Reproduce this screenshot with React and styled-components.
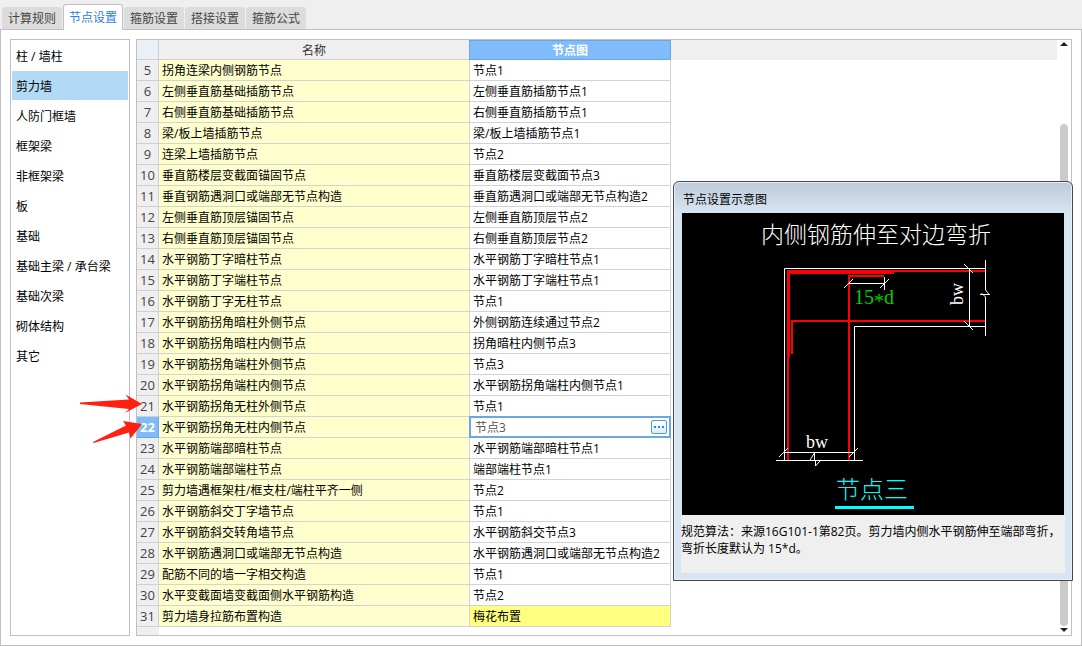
import { useState } from 'react'
import styled, { createGlobalStyle } from 'styled-components'

const GlobalStyle = createGlobalStyle`
    * {
        box-sizing: border-box;
    }
    body {
        margin: 0;
        background: #efefef;
        color: #000;
        font: 12px/20px 'Open Sans', 'Noto Sans CJK SC', sans-serif;
    }
    button, input {
        font: inherit;
        color: inherit;
    }
`
const Page = styled.div`
    position: relative;
    display: flex;
    flex-direction: column;
    min-height: 100vh;
`
const TabBar = styled.nav`
    display: flex;
    align-items: flex-end;
    gap: 1px;
    height: 30px;
    padding-left: 2px;
    z-index: 1;
`
const Tab = styled.button`
    height: ${props => props.$active ? '26px' : '22px'};
    margin-bottom: ${props => props.$active ? '0' : '1px'};
    padding: 0 5px;
    border: 1px solid ${props => props.$active ? '#c0c0c4' : '#dcdcdc'};
    border-bottom: none;
    border-radius: 3px 3px 0 0;
    background: ${props => props.$active ? '#fff' : '#dcdcdc'};
    color: ${props => props.$active ? '#2a7de1' : '#444'};
`
const Panel = styled.main`
    flex: 1;
    display: flex;
    gap: 6px;
    margin-top: -1px;
    padding: 9px;
    border: 1px solid #c0c0c4;
    background: #fff;
`
const Sidebar = styled.ul`
    flex: none;
    width: 120px;
    margin: 0;
    padding: 1px;
    border: 1px solid #c0c0c4;
    list-style: none;
`
const SideItem = styled.button`
    display: block;
    width: 100%;
    height: 29px;
    margin-bottom: 1px;
    padding: 2px 4px 0;
    border: none;
    background: ${props => props.$active ? '#b3daf5' : 'transparent'};
    text-align: left;
`
const GridArea = styled.section`
    flex: 1;
    display: flex;
    border: 1px solid #c0c0c4;
    background: linear-gradient(to right, #efefef 22px, #fff 22px);
`
const TableBox = styled.div`
    flex: 1;
`
const Table = styled.table`
    width: 100%;
    table-layout: fixed;
    border-collapse: separate;
    border-spacing: 0;

    col.number {
        width: 22px;
    }
    col.name {
        width: 311px;
    }
    col.node {
        width: 201px;
    }
`
const HeadCell = styled.th`
    height: 20px;
    padding: 2px 0 0;
    border: solid ${props => props.$active ? '#68a6e8' : '#d0d0d3'};
    border-width: 0 1px 1px 0;
    background: ${props => props.$active ? '#80bbfa' : '#efefef'};
    box-shadow: ${props => props.$active ? '-1px 0 #68a6e8, inset 0 1px #68a6e8' : 'none'};
    color: ${props => props.$active ? '#fff' : '#333'};
    font-weight: ${props => props.$active ? '700' : '400'};
    line-height: 17px;

    &:first-child {
        background: #ebeff6;
    }
    &:last-child {
        border-color: #efefef;
    }
`
const RowNumber = styled.th`
    height: 21px;
    padding: 0;
    border: solid ${props => props.$active ? '#68a6e8' : '#d0d0d3'};
    border-width: 0 1px 1px 0;
    background: ${props => props.$active ? '#80bbfa' : '#efefef'};
    color: ${props => props.$active ? '#fff' : '#444'};
    font-size: 13px;
    font-weight: ${props => props.$active ? '700' : '400'};
`
const Cell = styled.td`
    position: relative;
    height: 21px;
    padding: 2px 3px 0;
    border: solid #d3d3d3;
    border-width: 0 1px 1px 0;
    background: ${props => props.$fill || '#fff'};
    line-height: 18px;
    white-space: nowrap;
`
const Editor = styled.div`
    position: absolute;
    inset: -1px;
    display: flex;
    align-items: center;
    padding: 0 2px 0 4px;
    border: 2px solid #6ca6e6;
    background: #fff;

    input {
        flex: 1;
        min-width: 0;
        height: 18px;
        padding: 2px 0 0;
        border: none;
        outline: none;
        background: transparent;
        color: #555;
    }
    button {
        display: flex;
        align-items: center;
        justify-content: center;
        width: 16px;
        height: 14px;
        padding: 0;
        border: 1px solid #4a9be0;
        border-radius: 2px;
        background: linear-gradient(#fff, #dcebf8);
    }
`
const Scrollbar = styled.div`
    display: flex;
    flex-direction: column;
    align-items: center;
    width: 14px;
    padding: 2px 2px 3px;
    background: #fff;

    svg {
        display: block;
        flex: none;
    }
`
const Track = styled.div`
    flex: 1;
    display: flex;
    padding: 78px 0 2px;
`
const Thumb = styled.div`
    width: 8px;
    border-radius: 4px;
    background: #cbcbcb;
`
const Popup = styled.aside`
    position: absolute;
    top: 181px;
    right: 9px;
    width: 400px;
    padding: 0 7px 7px;
    border: 1px solid #45484c;
    border-radius: 6px 6px 0 0;
    background: linear-gradient(#bccad9, #d7e4f2 30px);
    box-shadow: inset 0 0 0 1px #e6eef7;

    h2 {
        margin: 0;
        padding: 8px 2px 3px;
        font-size: 12px;
        font-weight: 400;
        line-height: 20px;
    }
    svg {
        display: block;
        width: 382px;
        margin: 0 auto;
    }
    p {
        min-height: 58px;
        margin: 0;
        padding: 8px 0 0;
        background: #efefef;
        line-height: 17px;
    }
`
const Marks = styled.svg`
    position: absolute;
    left: 76px;
    top: 390px;
    pointer-events: none;
`

const tabs = ['计算规则', '节点设置', '箍筋设置', '搭接设置', '箍筋公式']
const groups = ['柱 / 墙柱', '剪力墙', '人防门框墙', '框架梁', '非框架梁', '板', '基础', '基础主梁 / 承台梁', '基础次梁', '砌体结构', '其它']
const rows = [
    [5, '拐角连梁内侧钢筋节点', '节点1'],
    [6, '左侧垂直筋基础插筋节点', '左侧垂直筋插筋节点1'],
    [7, '右侧垂直筋基础插筋节点', '右侧垂直筋插筋节点1'],
    [8, '梁/板上墙插筋节点', '梁/板上墙插筋节点1'],
    [9, '连梁上墙插筋节点', '节点2'],
    [10, '垂直筋楼层变截面锚固节点', '垂直筋楼层变截面节点3'],
    [11, '垂直钢筋遇洞口或端部无节点构造', '垂直筋遇洞口或端部无节点构造2'],
    [12, '左侧垂直筋顶层锚固节点', '左侧垂直筋顶层节点2'],
    [13, '右侧垂直筋顶层锚固节点', '右侧垂直筋顶层节点2'],
    [14, '水平钢筋丁字暗柱节点', '水平钢筋丁字暗柱节点1'],
    [15, '水平钢筋丁字端柱节点', '水平钢筋丁字端柱节点1'],
    [16, '水平钢筋丁字无柱节点', '节点1'],
    [17, '水平钢筋拐角暗柱外侧节点', '外侧钢筋连续通过节点2'],
    [18, '水平钢筋拐角暗柱内侧节点', '拐角暗柱内侧节点3'],
    [19, '水平钢筋拐角端柱外侧节点', '节点3'],
    [20, '水平钢筋拐角端柱内侧节点', '水平钢筋拐角端柱内侧节点1'],
    [21, '水平钢筋拐角无柱外侧节点', '节点1'],
    [22, '水平钢筋拐角无柱内侧节点', '节点3'],
    [23, '水平钢筋端部暗柱节点', '水平钢筋端部暗柱节点1'],
    [24, '水平钢筋端部端柱节点', '端部端柱节点1'],
    [25, '剪力墙遇框架柱/框支柱/端柱平齐一侧', '节点2'],
    [26, '水平钢筋斜交丁字墙节点', '节点1'],
    [27, '水平钢筋斜交转角墙节点', '水平钢筋斜交节点3'],
    [28, '水平钢筋遇洞口或端部无节点构造', '水平钢筋遇洞口或端部无节点构造2'],
    [29, '配筋不同的墙一字相交构造', '节点1'],
    [30, '水平变截面墙变截面侧水平钢筋构造', '节点2'],
    [31, '剪力墙身拉筋布置构造', '梅花布置'],
]
const editingRow = 22
const changedRow = 31

const Diagram = () => (
    <svg viewBox="682 213 382 302" role="img" aria-label="节点三">
        <rect x="682" y="213" width="382" height="302" fill="#000" />
        <g fill="none" stroke="#f00" strokeWidth="2" shapeRendering="crispEdges">
            <path d="M985 271H788V357M788 350V460" />
            <path d="M894 272H788V357" strokeWidth="3" />
            <path d="M884 276H849V460" />
            <path d="M985 321H792V354" />
        </g>
        <g fill="none" stroke="#fff" strokeWidth="1">
            <path d="M985 268.5H784.5V460M985 326.5H854.5V460" />
            <path d="M985.5 260V290L989.5 295M985.5 336V297L981.5 293M980 294.5H990" />
            <path d="M969.5 268V327M964 264L973 273M964 321L973 330" />
            <path d="M849 283.5H884M884.5 277V290M844 288L853 279M880 288L889 279" />
            <path d="M784 452.5H855M779 457L788 448M849 457L858 448" />
            <path d="M776 460.5H863M810 460L814.5 453V460M815.5 460V466L820 461" />
        </g>
        <g fontFamily="'Liberation Serif', 'Noto Sans CJK SC', serif">
            <text x="761" y="243" fontSize="23" fontWeight="300" fill="#fff">内侧钢筋伸至对边弯折</text>
            <text x="854" y="304" fontSize="20" fill="#0c0">15<tspan dy="4">*</tspan><tspan dy="-4">d</tspan></text>
            <text x="806" y="448" fontSize="18" fill="#fff">bw</text>
            <text transform="translate(963 305) rotate(-90)" fontSize="18" fill="#fff">bw</text>
            <text x="836" y="498" fontSize="24" fontWeight="300" fill="#0ff">节点三</text>
        </g>
        <rect x="835" y="506" width="79" height="3" fill="#0ff" />
    </svg>
)

export default function App() {
    const [tab, setTab] = useState('节点设置')
    const [group, setGroup] = useState('剪力墙')
    const [value, setValue] = useState('节点3')

    return (
        <Page>
            <GlobalStyle />
            <TabBar>
                {tabs.map(name => (
                    <Tab key={name} $active={name === tab} onClick={() => setTab(name)}>{name}</Tab>
                ))}
            </TabBar>
            <Panel>
                <Sidebar>
                    {groups.map(name => (
                        <li key={name}>
                            <SideItem $active={name === group} onClick={() => setGroup(name)}>{name}</SideItem>
                        </li>
                    ))}
                </Sidebar>
                <GridArea>
                    <TableBox>
                        <Table>
                            <colgroup>
                                <col className="number" />
                                <col className="name" />
                                <col className="node" />
                                <col />
                            </colgroup>
                            <thead>
                                <tr>
                                    <HeadCell />
                                    <HeadCell>名称</HeadCell>
                                    <HeadCell $active>节点图</HeadCell>
                                    <HeadCell />
                                </tr>
                            </thead>
                            <tbody>
                                {rows.map(([id, name, node]) => (
                                    <tr key={id}>
                                        <RowNumber scope="row" $active={id === editingRow}>{id}</RowNumber>
                                        <Cell $fill="#ffffcd">{name}</Cell>
                                        <Cell $fill={id === changedRow ? '#ffff80' : '#fff'}>
                                            {id === editingRow ? (
                                                <Editor>
                                                    <input aria-label={name} value={value} onChange={e => setValue(e.target.value)} />
                                                    <button aria-label="节点图">
                                                        <svg width="10" height="2" fill="#2f86d6">
                                                            <path d="M0 0h2v2h-2zM4 0h2v2h-2zM8 0h2v2h-2z" />
                                                        </svg>
                                                    </button>
                                                </Editor>
                                            ) : node}
                                        </Cell>
                                    </tr>
                                ))}
                            </tbody>
                        </Table>
                    </TableBox>
                    <Scrollbar>
                        <svg width="8" height="4" fill="#222"><path d="M0 4L4 0L8 4z" /></svg>
                        <Track>
                            <Thumb />
                        </Track>
                        <svg width="8" height="4" fill="#222"><path d="M0 0L4 4L8 0z" /></svg>
                    </Scrollbar>
                </GridArea>
            </Panel>
            <Popup>
                <h2>节点设置示意图</h2>
                <Diagram />
                <p>规范算法：来源16G101-1第82页。剪力墙内侧水平钢筋伸至端部弯折，弯折长度默认为 15*d。</p>
            </Popup>
            <Marks width="68" height="56" fill="#fe2010">
                <path d="M4 12.500L53 9.500L49.500 4.500L66 14L49 23L53 19L4 14z" />
                <path d="M17 52L50 35.500L47 31L66 34L54.500 48.500L53 42.500L17.500 53z" />
            </Marks>
        </Page>
    )
}
